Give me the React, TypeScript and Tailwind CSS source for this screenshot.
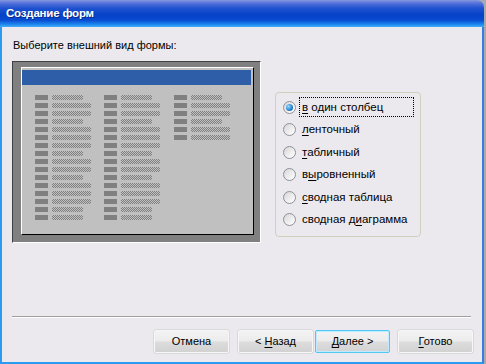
import React from 'react';

const font = "font-['Liberation_Sans',Arial,sans-serif]";

// S = short field, L = long field
const col1 = 'SLLSLLLSLLSLLLSS';
const col3 = 'SLLSLL';

const options = [
  { pre: '', key: 'в', post: ' один столбец' },
  { pre: '', key: 'л', post: 'енточный' },
  { pre: '', key: 'т', post: 'абличный' },
  { pre: 'в', key: 'ы', post: 'ровненный' },
  { pre: '', key: 'с', post: 'водная таблица' },
  { pre: 'сводная д', key: 'и', post: 'аграмма' },
];

function FieldRow({ long }: { long: boolean }) {
  return (
    <div className="flex h-[5px] gap-[4px]">
      <div className="w-[13px] bg-[#808080]" />
      <div
        className={
          long
            ? 'w-[39px] bg-[repeating-conic-gradient(#808080_0_25%,#c0c0c0_0_50%)] bg-[length:2px_2px]'
            : 'w-[31px] bg-[repeating-conic-gradient(#808080_0_25%,#c0c0c0_0_50%)] bg-[length:2px_2px]'
        }
      />
    </div>
  );
}

function FieldColumn({ pattern, width }: { pattern: string; width: string }) {
  return (
    <div className={`flex flex-col gap-[3px] ${width}`}>
      {pattern.split('').map((c, i) => (
        <FieldRow key={i} long={c === 'L'} />
      ))}
    </div>
  );
}

function Radio({ checked }: { checked: boolean }) {
  return (
    <div className="w-[13px] h-[13px] shrink-0 rounded-full border border-[#8e9199] bg-[linear-gradient(135deg,#d6d6d6,#f4f4f4_70%,#ffffff)] flex items-center justify-center">
      {checked && (
        <div className="w-[7px] h-[7px] rounded-full bg-[radial-gradient(circle_at_35%_35%,#9adcff,#2a86d0_55%,#0d4f9a)]" />
      )}
    </div>
  );
}

function WizButton({ children, focused }: { children: React.ReactNode; focused?: boolean }) {
  return (
    <div
      className={`w-[75px] h-[23px] flex items-center justify-center rounded-[2px] text-[11px] text-black bg-[linear-gradient(to_bottom,#f3f3f3_0%,#ececec_45%,#dcdcdc_55%,#d2d2d2_100%)] ${
        focused ? 'border border-[#4fc8f4] shadow-[inset_0_0_0_1px_#bfeaff]' : 'border border-[#f6f6f6] shadow-[0_0_0_0.5px_#c8c8c8]'
      }`}
    >
      {children}
    </div>
  );
}

export default function App() {
  return (
    <div className={`w-[486px] h-[364px] bg-[#a9a9b0] flex overflow-hidden ${font}`}>
      <div className="w-[484px] h-[364px] flex flex-col rounded-tr-[7px] overflow-hidden">
        {/* Title bar */}
        <div className="h-[27px] shrink-0 flex items-center pl-[6px] bg-[linear-gradient(to_bottom,#8598e0_0%,#5672da_12%,#1f52d0_30%,#0542c6_55%,#0a4cd2_75%,#1c86ee_90%,#43aef8_100%)]">
          <span className="text-white font-bold text-[11.5px] tracking-[-0.2px] [text-shadow:1px_1px_#0b2a8a]">Создание форм</span>
        </div>

        {/* Body */}
        <div className="flex-1 flex flex-col bg-[#ebe9ee] border-l-[2px] border-r-[2px] border-b-[2px] border-l-[#2a9af2] border-r-[#3d7ae0] border-b-[#2a9af2] pl-[10px]">
          <div className="pt-[12px] leading-[13px] text-[11px] text-black pl-[1px]">Выберите внешний вид формы:</div>

          <div className="flex mt-[9px]">
            {/* Preview */}
            <div className="w-[249px] h-[182px] border border-t-[#404040] border-l-[#404040] border-b-white border-r-white bg-[#808080] pt-[5px] pl-[8px]">
              <div className="w-[233px] h-[168px] border border-t-white border-l-white border-b-black border-r-black bg-[#c0c0c0] flex flex-col">
                <div className="h-[15px] mt-[2px] mr-[2px] bg-[#2f5ea8]" />
                <div className="flex mt-[10px] pl-[13px]">
                  <FieldColumn pattern={col1} width="w-[69px]" />
                  <FieldColumn pattern={col1} width="w-[70px]" />
                  <FieldColumn pattern={col3} width="w-[70px]" />
                </div>
              </div>
            </div>

            {/* Options */}
            <div className="ml-[14px] mt-[31px] w-[146px] h-[145px] rounded-[4px] border border-[#d0d0bf] pl-[7px] pt-[3px] flex flex-col">
              {options.map((o, i) => (
                <div key={i} className="flex items-center h-[22.5px]">
                  <Radio checked={i === 0} />
                  <div
                    className={`ml-[3px] h-[20px] w-[115px] flex items-center px-[2px] text-[11.5px] text-black border border-dotted ${
                      i === 0 ? 'border-black' : 'border-transparent'
                    }`}
                  >
                    <span>
                      {o.pre}
                      <u className="underline-offset-2">{o.key}</u>
                      {o.post}
                    </span>
                  </div>
                </div>
              ))}
            </div>
          </div>

          {/* Separator */}
          <div className="mt-[73px] mr-[11px] h-[2px] border-t border-t-[#a0a0a0] border-b border-b-white" />

          {/* Buttons */}
          <div className="flex justify-end mt-[12px] pr-[9px]">
            <WizButton>Отмена</WizButton>
            <div className="w-[9px]" />
            <WizButton>
              <span>
                &lt; <u className="underline-offset-2">Н</u>азад
              </span>
            </WizButton>
            <div className="w-[2px]" />
            <WizButton focused>
              <span>
                <u className="underline-offset-2">Д</u>алее &gt;
              </span>
            </WizButton>
            <div className="w-[8px]" />
            <WizButton>
              <span>
                <u className="underline-offset-2">Г</u>отово
              </span>
            </WizButton>
          </div>
        </div>
      </div>
    </div>
  );
}
